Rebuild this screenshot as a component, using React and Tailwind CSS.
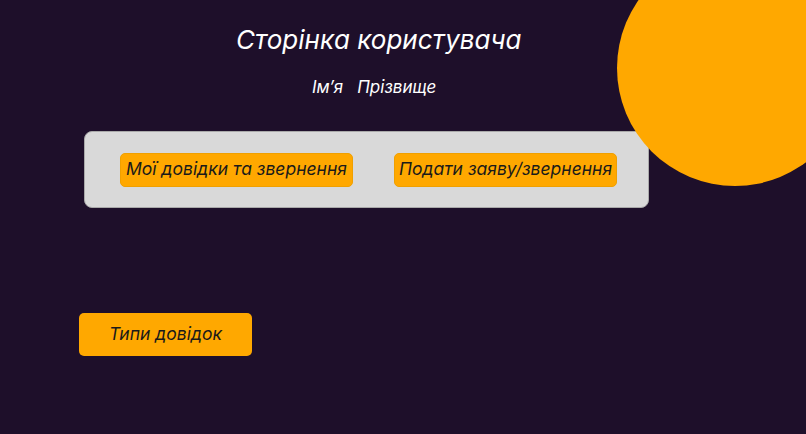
export default function App() {
  return (
    <div className="relative h-[434px] w-[806px] overflow-hidden bg-[#1e0f2a] font-['Inter',sans-serif] italic">
      <div className="flex flex-col">
        <h1 className="mt-[23px] ml-[236px] text-[26px] leading-[34px] text-white">Сторінка користувача</h1>
        <div className="mt-[20px] ml-[312px] flex gap-[14px] text-[17px] leading-[20px] text-white">
          <span>Ім’я</span>
          <span>Прізвище</span>
        </div>
        <div className="mt-[34px] ml-[84px] flex h-[77px] w-[565px] items-center gap-[41px] rounded-[8px] border border-[#a9a9a9] bg-[#d9d9d9] pl-[35px]">
          <button className="h-[34px] w-[233px] rounded-[5px] border border-[#f0a000] bg-[#ffa800] text-[17.5px] text-[#1a1a1a] italic">
            Мої довідки та звернення
          </button>
          <button className="h-[34px] w-[223px] rounded-[5px] border border-[#f0a000] bg-[#ffa800] text-[17.5px] text-[#1a1a1a] italic">
            Подати заяву/звернення
          </button>
        </div>
        <button className="mt-[105px] ml-[79px] h-[43px] w-[173px] rounded-[5px] bg-[#ffa800] text-[17.5px] text-[#1a1a1a] italic">
          Типи довідок
        </button>
      </div>
      <div className="absolute left-[617px] top-[-50px] h-[236px] w-[236px] rounded-full bg-[#ffa800]" />
    </div>
  );
}
